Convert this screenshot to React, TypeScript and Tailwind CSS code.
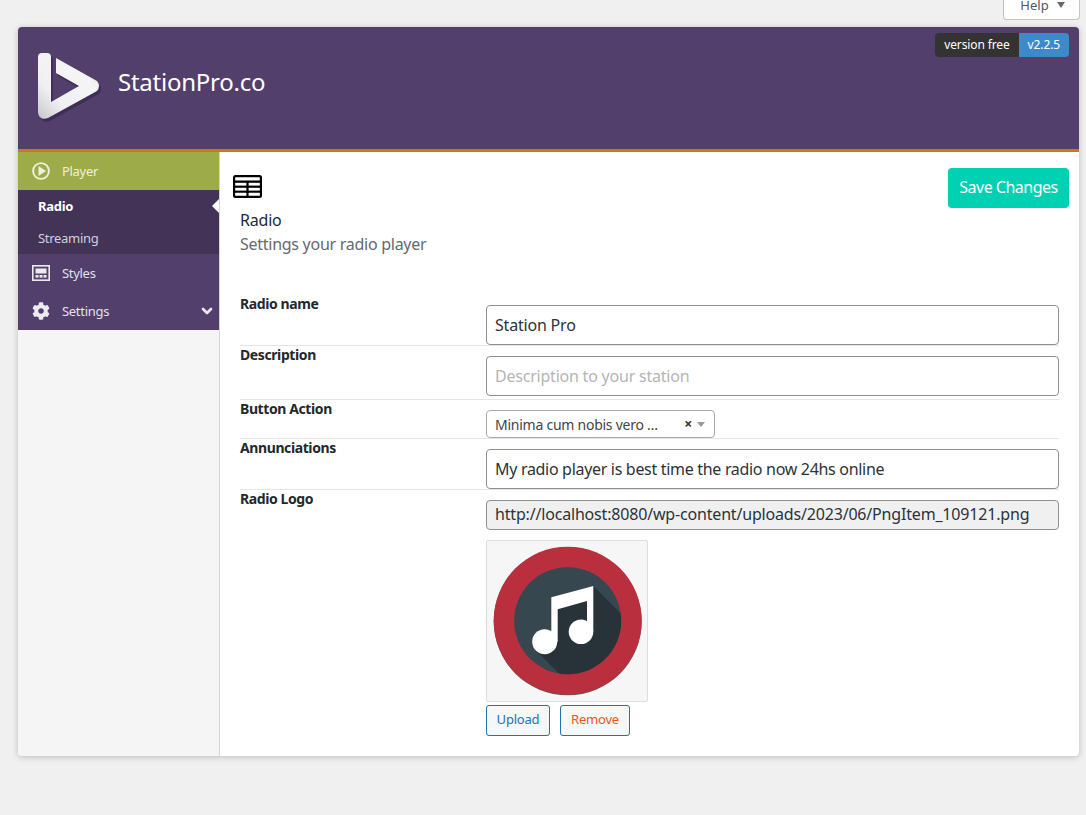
import { ChevronDown } from 'lucide-react'
import { FaCog } from 'react-icons/fa'

const FONT = 'font-["Noto_Sans",sans-serif]'

function BrandLogo() {
  return (
    <svg width="66" height="70" viewBox="0 0 66 70" className="shrink-0">
      <defs>
        <linearGradient id="brand" x1="0" y1="1" x2="1" y2="0">
          <stop offset="0" stopColor="#c6c7ca" />
          <stop offset="0.3" stopColor="#f0f0f2" />
          <stop offset="0.7" stopColor="#f5f5f6" />
          <stop offset="1" stopColor="#d5d6d9" />
        </linearGradient>
      </defs>
      <path
        d="M0 4 Q0 0 4 0 H9 Q13 0 13 4 V49 L41 33 L18 20 V5 L59 28 Q63 33 59 38 L10 65 Q2 68 0 60 Z"
        fill="#3f2e56"
        transform="translate(2 3)"
      />
      <path
        d="M0 4 Q0 0 4 0 H9 Q13 0 13 4 V49 L41 33 L18 20 V5 L59 28 Q63 33 59 38 L10 65 Q2 68 0 60 Z"
        fill="url(#brand)"
      />
    </svg>
  )
}

function TableIcon() {
  return (
    <svg width="29" height="23" viewBox="0 0 29 23" className="block">
      <rect width="29" height="23" rx="2.5" fill="#000" />
      <rect x="2.2" y="2.2" width="24.6" height="3.4" rx="0.5" fill="#fff" />
      <rect x="2.2" y="7.8" width="11.2" height="2.8" fill="#fff" />
      <rect x="15.6" y="7.8" width="11.2" height="2.8" fill="#fff" />
      <rect x="2.2" y="12.8" width="11.2" height="2.8" fill="#fff" />
      <rect x="15.6" y="12.8" width="11.2" height="2.8" fill="#fff" />
      <rect x="2.2" y="17.8" width="11.2" height="3" rx="0.5" fill="#fff" />
      <rect x="15.6" y="17.8" width="11.2" height="3" rx="0.5" fill="#fff" />
    </svg>
  )
}

function PlayCircle() {
  return (
    <svg width="18" height="18" viewBox="0 0 18 18" className="shrink-0">
      <circle cx="9" cy="9" r="7.9" fill="none" stroke="#eef1dc" strokeWidth="1.9" />
      <path d="M6.5 4 L14 9 L6.5 14 Z" fill="#eef1dc" />
    </svg>
  )
}

function StylesIcon() {
  return (
    <svg width="18" height="16" viewBox="0 0 18 16" className="shrink-0">
      <rect width="18" height="16" fill="#ece9f0" />
      <rect x="1.6" y="1.6" width="14.8" height="12.8" fill="#53406c" />
      <rect x="3.5" y="3.5" width="11" height="5" fill="#ece9f0" />
      <rect x="3.5" y="10" width="3" height="2.6" fill="#ece9f0" />
      <rect x="7.5" y="10" width="3" height="2.6" fill="#ece9f0" />
      <rect x="11.5" y="10" width="3" height="2.6" fill="#ece9f0" />
    </svg>
  )
}

function RadioLogo() {
  return (
    <svg width="160" height="160" viewBox="0 0 160 160" className="block">
      <defs>
        <clipPath id="inner">
          <circle cx="80.7" cy="79.7" r="53.5" />
        </clipPath>
      </defs>
      <circle cx="80.7" cy="80.3" r="74" fill="#5a5a5a" />
      <circle cx="80.7" cy="79.7" r="74" fill="#b92f3e" />
      <circle cx="80.7" cy="79.7" r="53.5" fill="#37474f" />
      <path d="M106.3 45 L170 109 L110 170 L49 109.5 L64.3 93 V56.3 Z" fill="#283339" clipPath="url(#inner)" />
      <path d="M64.3 56.3 L106.3 45 V90.7 H100 V60 L70.7 68.3 V100.7 H64.3 Z" fill="#fff" />
      <circle cx="57.7" cy="100.7" r="12.5" fill="#fff" />
      <circle cx="94" cy="90.7" r="12.3" fill="#fff" />
    </svg>
  )
}

function Row({ label, children, className }: { label: string; children: React.ReactNode; className: string }) {
  return (
    <div className={`flex border-b border-[#e5e5e5] pt-[10px] ${className}`}>
      <div className="-mt-[11px] w-[246px] shrink-0 text-[14px] leading-[20px] font-bold tracking-[-0.4px] text-[#23282d]">
        {label}
      </div>
      <div className="min-w-0 flex-1">{children}</div>
    </div>
  )
}

const inputClass =
  'block h-[40px] w-full rounded-[4px] border border-[#8c8f94] bg-white px-2 text-[16px] text-[#2c3338] outline-none placeholder:text-[#b5b5b5]'

export default function App() {
  return (
    <div className={`min-h-[815px] bg-[#f0f0f1] pl-[18px] pr-[7px] ${FONT}`}>
      <div className="flex h-[20px] justify-end">
        <div className="-mr-[1px] flex h-[20px] w-[77px] items-start justify-center gap-[8px] overflow-hidden rounded-b-[4px] border border-t-0 border-[#c3c4c7] bg-white pl-[2px] text-[13px] leading-[16px] text-[#50575e]">
          <span className="-mt-[3px]">Help</span>
          <span className="mt-[2px] h-0 w-0 border-x-[4.5px] border-t-[6px] border-x-transparent border-t-[#646970]" />
        </div>
      </div>

      <div className="mt-[7px] overflow-hidden rounded-[4px] bg-white shadow-[0_1px_6px_rgba(0,0,0,0.22)]">
        <header className="flex h-[125px] items-start justify-between border-b-[3px] border-[#d8711b] bg-[#533f6c] pl-[20px] pr-[10px]">
          <div className="flex items-center gap-[14px] pt-[26px]">
            <BrandLogo />
            <span className="-mt-[12px] text-[24px] tracking-[-0.25px] text-white">StationPro.co</span>
          </div>
          <div className="mt-[6px] flex h-[24px] overflow-hidden rounded-[4px] text-[12px] leading-[24px] tracking-[-0.12px] text-white">
            <span className="bg-[#333333] px-[9px]">version free</span>
            <span className="bg-[#3d8acb] px-[9px]">v2.2.5</span>
          </div>
        </header>

        <div className="flex h-[604px]">
          <aside className="w-[202px] shrink-0 border-r border-[#d5d5d5] bg-[#f5f5f5] text-[13px] tracking-[-0.3px]">
            <div className="flex h-[38px] items-center gap-[12px] bg-[#9eab49] pl-[14px] text-[#edf0da]">
              <PlayCircle />
              <span className="mt-[2px]">Player</span>
            </div>
            <div className="relative h-[64px] bg-[#433357] pl-[20px]">
              <div className="flex h-[32px] items-center pt-[2px] font-bold text-white">Radio</div>
              <div className="flex h-[32px] items-center pt-[2px] text-[#d4cfdb]">Streaming</div>
              <span className="absolute right-0 top-[9px] h-0 w-0 border-y-[7px] border-r-[7px] border-y-transparent border-r-white" />
            </div>
            <div className="flex h-[38px] items-center gap-[12px] bg-[#533f6c] pl-[14px] text-[#e4e0ea]">
              <StylesIcon />
              <span className="mt-[2px]">Styles</span>
            </div>
            <div className="flex h-[38px] items-center gap-[12px] bg-[#533f6c] pl-[14px] pr-[4px] text-[#e4e0ea]">
              <FaCog size={18} className="shrink-0 text-[#ecebf0]" />
              <span className="mt-[2px] flex-1">Settings</span>
              <ChevronDown size={16} strokeWidth={4} className="text-[#e9e6ee]" />
            </div>
          </aside>

          <main className="min-w-0 flex-1 pl-[20px] pr-[20px]">
            <div className="relative h-[143px]">
              <div className="absolute right-[-10px] top-[16px] flex h-[40px] w-[121px] items-center justify-center rounded-[4px] bg-[#00d1b2] pb-[2px] text-[16px] tracking-[-0.5px] text-white">
                Save Changes
              </div>
              <div className="-ml-[7px] pt-[23px]">
                <TableIcon />
              </div>
              <div className="mt-[10px] text-[16px] leading-[24px] tracking-[-0.2px] text-[#1d2a35]">Radio</div>
              <div className="text-[16px] leading-[24px] tracking-[-0.27px] text-[#646970]">Settings your radio player</div>
            </div>

            <Row label="Radio name" className="h-[51px]">
              <input className={`${inputClass} tracking-[-0.2px]`} defaultValue="Station Pro" />
            </Row>
            <Row label="Description" className="h-[54px]">
              <input className={`${inputClass} tracking-[-0.22px]`} placeholder="Description to your station" />
            </Row>
            <Row label="Button Action" className="h-[39px]">
              <div className="flex h-[28px] w-[229px] items-center rounded-[4px] border border-[#aaaaaa] bg-white pl-2 pr-[9px] text-[14px] tracking-[-0.25px] text-[#444444]">
                <span className="flex-1 truncate">Minima cum nobis vero …</span>
                <span className="ml-2 text-[14px] font-bold leading-none text-[#333333]">×</span>
                <span className="ml-[5px] h-0 w-0 border-x-[4px] border-t-[5px] border-x-transparent border-t-[#999999]" />
              </div>
            </Row>
            <Row label="Annunciations" className="h-[51px]">
              <input
                className={`${inputClass} tracking-[-0.31px]`}
                defaultValue="My radio player is best time the radio now 24hs online"
              />
            </Row>
            <div className="flex pt-[10px]">
              <div className="-mt-[11px] w-[246px] shrink-0 text-[14px] leading-[20px] font-bold tracking-[-0.4px] text-[#23282d]">
                Radio Logo
              </div>
              <div className="min-w-0 flex-1">
                <input
                  readOnly
                  className="block h-[30px] w-full rounded-[4px] border border-[#8c8f94] bg-[#f0f0f1] px-2 pb-[2px] text-[16px] tracking-[-0.18px] text-[#2c3338] outline-none"
                  defaultValue="http://localhost:8080/wp-content/uploads/2023/06/PngItem_109121.png"
                />
                <div className="mt-[10px] h-[162px] w-[162px] rounded-[2px] border border-[#dddddd] bg-[#f6f6f6]">
                  <RadioLogo />
                </div>
                <div className="mt-[3px] flex gap-[10px] text-[13px] tracking-[-0.2px]">
                  <div className="flex h-[31px] w-[64px] items-center justify-center rounded-[3px] border border-[#2271b1] bg-[#f6f7f7] pb-[1px] text-[#2271b1]">
                    Upload
                  </div>
                  <div className="flex h-[31px] w-[70px] items-center justify-center rounded-[3px] border border-[#2271b1] bg-[#f6f7f7] pb-[1px] text-[#f1541d]">
                    Remove
                  </div>
                </div>
              </div>
            </div>
          </main>
        </div>
      </div>
    </div>
  )
}
